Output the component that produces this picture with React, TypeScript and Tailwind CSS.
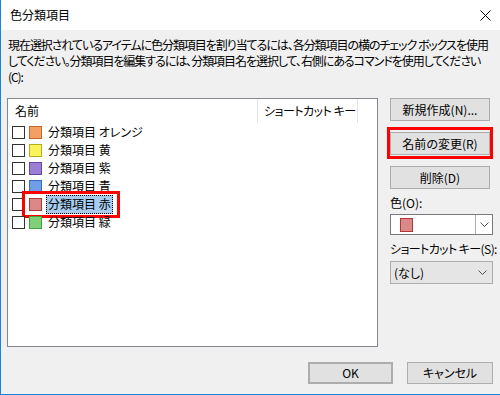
import React from "react";

const FONT = "font-['Noto_Sans_CJK_JP','Noto_Sans',sans-serif] [font-feature-settings:'palt']";

const CATEGORIES = [
  { name: "分類項目 オレンジ", fill: "bg-[#f4a064]", border: "border-[#c8662c]" },
  { name: "分類項目 黄", fill: "bg-[#fbf35c]", border: "border-[#b9ac1c]" },
  { name: "分類項目 紫", fill: "bg-[#9b7fd2]", border: "border-[#6345a6]" },
  { name: "分類項目 青", fill: "bg-[#6f9de6]", border: "border-[#3c6bc2]" },
  { name: "分類項目 赤", fill: "bg-[#da8888]", border: "border-[#b23434]", selected: true },
  { name: "分類項目 緑", fill: "bg-[#80d07a]", border: "border-[#43a23c]" },
] as const;

function Chevron() {
  return (
    <svg width="9" height="5" viewBox="0 0 9 5" className="text-[#555]">
      <path d="M0.5 0.5 L4.5 4.5 L8.5 0.5" fill="none" stroke="currentColor" strokeWidth="1" />
    </svg>
  );
}

function Button({ children, className = "" }: { children: React.ReactNode; className?: string }) {
  return (
    <div
      className={`flex items-center justify-center bg-[#e1e1e1] border border-[#adadad] text-[12px] text-black whitespace-nowrap ${className}`}
    >
      {children}
    </div>
  );
}

export default function App() {
  return (
    <div
      className={`w-[500px] h-[395px] overflow-hidden bg-[#f0f0f0] border-l border-b border-[#1883d7] flex flex-col text-black ${FONT}`}
    >
      <div className="h-[30px] bg-white flex items-center justify-between pl-[9px] pr-[9px] shrink-0">
        <span className="text-[12px]">色分類項目</span>
        <svg width="11" height="11" viewBox="0 0 11 11">
          <path d="M0.5 0.5 L10.5 10.5 M10.5 0.5 L0.5 10.5" stroke="#000" strokeWidth="1" />
        </svg>
      </div>

      <div className="mt-[7px] pl-[7px] text-[12px] leading-[16px] whitespace-nowrap tracking-[-1.05px]">
        <div>現在選択されているアイテムに色分類項目を割り当てるには、各分類項目の横のチェック ボックスを使用</div>
        <div>してください。分類項目を編集するには、分類項目名を選択して、右側にあるコマンドを使用してください</div>
        <div>(C):</div>
      </div>

      <div className="mt-[13px] flex">
        <div className="ml-[6px] w-[371px] h-[249px] bg-white border border-[#828790] flex flex-col">
          <div className="h-[24px] flex text-[12px] items-center whitespace-nowrap">
            <div className="w-[250px] h-full pl-[7px] flex items-center border-r border-[#e5e5e5]">名前</div>
            <div className="w-[100px] h-full pl-[6px] flex items-center border-r border-[#e5e5e5] tracking-[-0.5px]">
              ショートカット キー
            </div>
          </div>
          <div className="flex flex-col">
            {CATEGORIES.map((c) => (
              <div key={c.name} className="relative h-[18px] flex items-center pl-[4px] text-[12px] whitespace-nowrap">
                <div className="w-[13px] h-[13px] border border-[#333] bg-white shrink-0" />
                <div className={`ml-[4px] w-[13px] h-[13px] border ${c.fill} ${c.border} shrink-0`} />
                {"selected" in c ? (
                  <>
                    <span className="ml-[4px] h-[19px] px-[1px] flex items-center bg-[#a6cdf0] border border-dotted border-black">
                      {c.name}
                    </span>
                    <div className="absolute left-[14px] top-[-4px] w-[98px] h-[27px] border-[3px] border-[#f00]" />
                  </>
                ) : (
                  <span className="ml-[6px]">{c.name}</span>
                )}
              </div>
            ))}
          </div>
        </div>

        <div className="ml-[12px] w-[103px] flex flex-col">
          <Button className="w-[100px] h-[23px]">新規作成(N)...</Button>
          <div className="relative mt-[11px]">
            <Button className="w-[100px] h-[23px]">名前の変更(R)</Button>
            <div className="absolute left-[-3px] top-[-5px] w-[106px] h-[32px] border-[3px] border-[#f00]" />
          </div>
          <Button className="mt-[11px] w-[100px] h-[23px]">削除(D)</Button>
          <div className="mt-[6px] text-[12px] leading-[16px]">色(O):</div>
          <div className="mt-[3px] w-[103px] h-[21px] bg-white border border-[#7a7a7a] flex">
            <div className="flex-1 flex items-center pl-[9px]">
              <div className="w-[13px] h-[14px] bg-[#da8888] border border-[#b23434]" />
            </div>
            <div className="w-[17px] border-l border-[#adadad] flex items-center justify-center">
              <Chevron />
            </div>
          </div>
          <div className="mt-[6px] text-[12px] leading-[16px] whitespace-nowrap tracking-[-0.6px]">
            ショートカット キー(S):
          </div>
          <div className="mt-[4px] w-[103px] h-[23px] bg-[#e5e5e5] border border-[#adadad] flex items-center justify-between pl-[3px] pr-[5px] text-[12px]">
            <span>(なし)</span>
            <Chevron />
          </div>
        </div>
      </div>

      <div className="mt-[15px] flex justify-end pr-[7px] gap-[14px]">
        <Button className="w-[85px] h-[22px] border-2 border-[#0078d7]">OK</Button>
        <Button className="w-[86px] h-[22px]">キャンセル</Button>
      </div>
    </div>
  );
}
